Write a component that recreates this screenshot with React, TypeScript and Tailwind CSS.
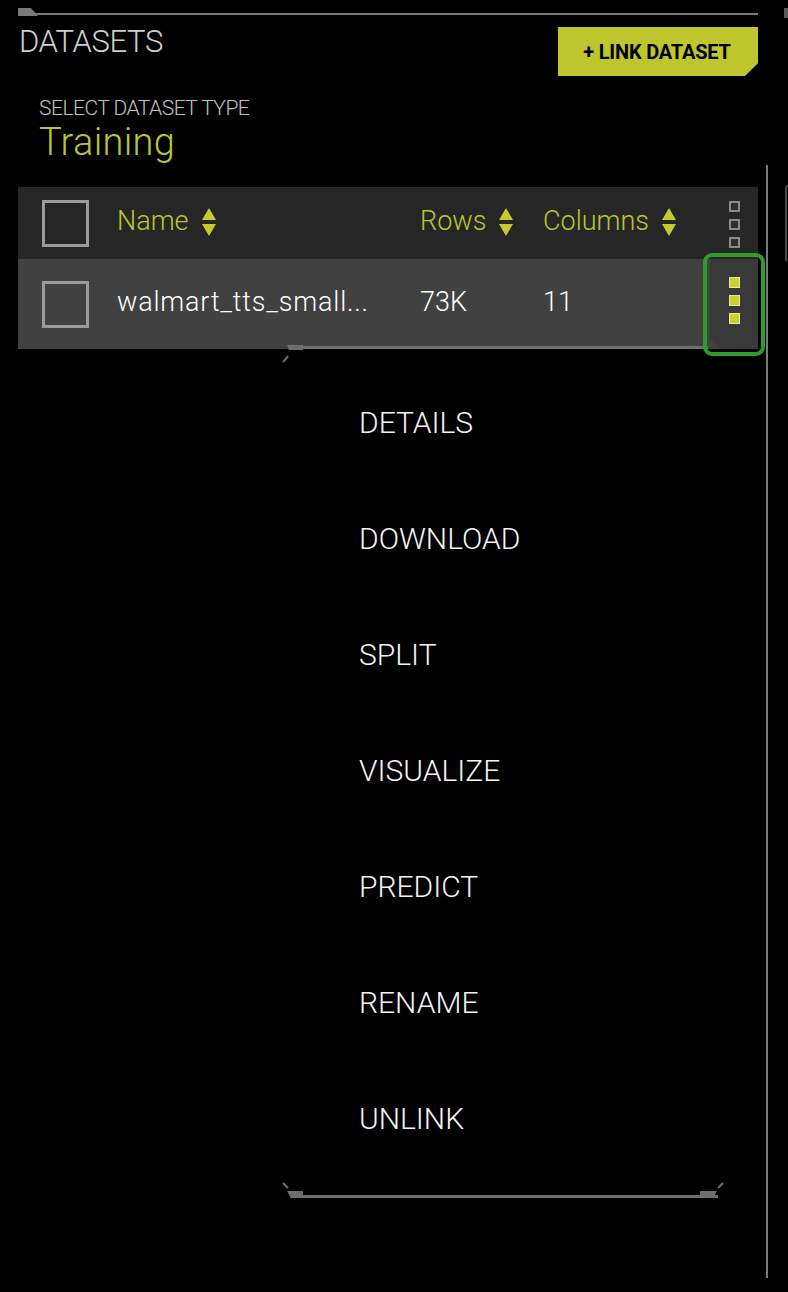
import React from "react";

const SortIcon = () => (
  <svg width="14" height="28" viewBox="0 0 14 28" className="ml-[13px] shrink-0">
    <polygon points="7,0 14,12 0,12" fill="#c3cc2f" />
    <polygon points="0,16 14,16 7,28" fill="#c3cc2f" />
  </svg>
);

const Checkbox = () => (
  <div className="w-[47px] h-[47px] border-[3px] border-[#9b9b9b] shrink-0" />
);

const HeaderKebab = () => (
  <div className="w-[48px] flex flex-col items-center gap-[7px] mt-[2px]">
    <div className="w-[11px] h-[11px] border-2 border-[#8a8a8a] bg-[#2e2e2e]" />
    <div className="w-[11px] h-[11px] border-2 border-[#8a8a8a] bg-[#2e2e2e]" />
    <div className="w-[11px] h-[11px] border-2 border-[#8a8a8a] bg-[#2e2e2e]" />
  </div>
);

const RowKebab = () => (
  <div className="relative w-[48px] h-full bg-[#393939] flex flex-col items-center pt-[18px] gap-[7px] [clip-path:polygon(0_0,100%_0,100%_100%,10px_100%,0_calc(100%-10px))]">
    <div className="w-[11px] h-[11px] border border-[#e6ea9c] bg-[#c9d32e]" />
    <div className="w-[11px] h-[11px] border border-[#e6ea9c] bg-[#c9d32e]" />
    <div className="w-[11px] h-[11px] border border-[#e6ea9c] bg-[#c9d32e]" />
  </div>
);

const menuItems = ["DETAILS", "DOWNLOAD", "SPLIT", "VISUALIZE", "PREDICT", "RENAME", "UNLINK"];

const App = () => {
  return (
    <div
      className="relative w-[788px] h-[1292px] bg-black overflow-hidden"
      style={{ fontFamily: "Roboto, 'Liberation Sans', sans-serif" }}
    >
      {/* top divider */}
      <div className="relative h-[27px] pl-[18px] pr-[30px] pt-[13px]">
        <div className="h-[2px] bg-[#7a7a7a]" />
        <svg width="20" height="8" className="absolute left-[18px] top-[8px]">
          <polygon points="0,0 13,0 20,8 0,8" fill="#7a7a7a" />
        </svg>
      </div>

      {/* heading */}
      <div className="flex justify-between items-start pl-[19px] pr-[30px]">
        <h1 className="mt-[-3px] text-[31px] leading-[36px] tracking-[-0.4px] font-light text-[#cfcfcf]">
          DATASETS
        </h1>
        <button className="w-[200px] h-[49px] bg-[#bec62d] text-black text-[20px] font-bold tracking-[-0.2px] flex items-center justify-center pr-[2px] [clip-path:polygon(0_0,100%_0,100%_74%,calc(100%-13px)_100%,0_100%)]">
          + LINK DATASET
        </button>
      </div>

      <div className="pl-[39px] mt-[20px]">
        <div className="text-[21px] leading-[24px] tracking-[-0.5px] font-light text-[#c2c2c2]">
          SELECT DATASET TYPE
        </div>
        <div className="text-[38px] leading-[44px] tracking-[0.3px] font-light text-[#bac630]">
          Training
        </div>
      </div>

      {/* table */}
      <div className="mx-[18px] mt-[23px] w-[740px]">
        <div className="h-[72px] bg-[#262626] flex items-center pl-[24px] text-[27px] font-light text-[#bac630]">
          <Checkbox />
          <div className="ml-[28px] w-[303px] flex items-center mt-[-3px]">
            Name
            <SortIcon />
          </div>
          <div className="w-[123px] flex items-center mt-[-3px]">
            Rows
            <SortIcon />
          </div>
          <div className="w-[167px] flex items-center mt-[-3px]">
            Columns
            <SortIcon />
          </div>
          <HeaderKebab />
        </div>
        <div className="h-[90px] bg-[#414141] flex items-center pl-[24px] text-[27px] font-light text-white">
          <Checkbox />
          <div className="ml-[28px] w-[303px] truncate tracking-[0.8px] mt-[-3px]">walmart_tts_small...</div>
          <div className="w-[123px] mt-[-3px]">73K</div>
          <div className="w-[167px] mt-[-3px]">11</div>
          <RowKebab />
        </div>
      </div>

      {/* dropdown menu */}
      <div className="absolute left-[280px] top-[344px] w-[446px] h-[860px]">
        <svg width="446" height="22" className="absolute left-0 top-0">
          <rect x="10" y="2" width="418" height="3" fill="#6e6e6e" />
          <polygon points="7,1 23,1 23,6 9,6" fill="#6e6e6e" />
          <line x1="3" y1="18" x2="8" y2="12" stroke="#6e6e6e" strokeWidth="2" />
        </svg>
        <div className="pt-[20px] pl-[79px] flex flex-col">
          {menuItems.map((item) => (
            <div key={item} className="h-[116px] flex items-center text-[30px] font-light text-[#f4f4f4]">
              {item}
            </div>
          ))}
        </div>
        <svg width="446" height="22" className="absolute left-0 bottom-[2px]">
          <line x1="3" y1="3" x2="8" y2="8" stroke="#6e6e6e" strokeWidth="2" />
          <line x1="443" y1="3" x2="438" y2="8" stroke="#6e6e6e" strokeWidth="2" />
          <rect x="10" y="15" width="428" height="3" fill="#6e6e6e" />
          <polygon points="7,11 23,11 23,18 11,18" fill="#6e6e6e" />
          <polygon points="420,11 437,11 433,18 420,18" fill="#6e6e6e" />
        </svg>
      </div>

      {/* right panel edge */}
      <div className="absolute left-[766px] top-[165px] w-[2px] h-[1113px] bg-[#7a7a7a]" />
      <div className="absolute left-[785px] top-[185px] w-[3px] h-[76px] border-l-2 border-t-2 border-[#4a4a4a] rounded-tl-[3px]" />
      <div className="absolute left-[784px] top-[8px] w-[4px] h-[10px] bg-[#5a5a5a]" />

      {/* selection highlight */}
      <div className="absolute left-[703px] top-[253px] w-[62px] h-[103px] border-4 border-[#2e9b2e] rounded-[9px]" />
    </div>
  );
};

export default App;
